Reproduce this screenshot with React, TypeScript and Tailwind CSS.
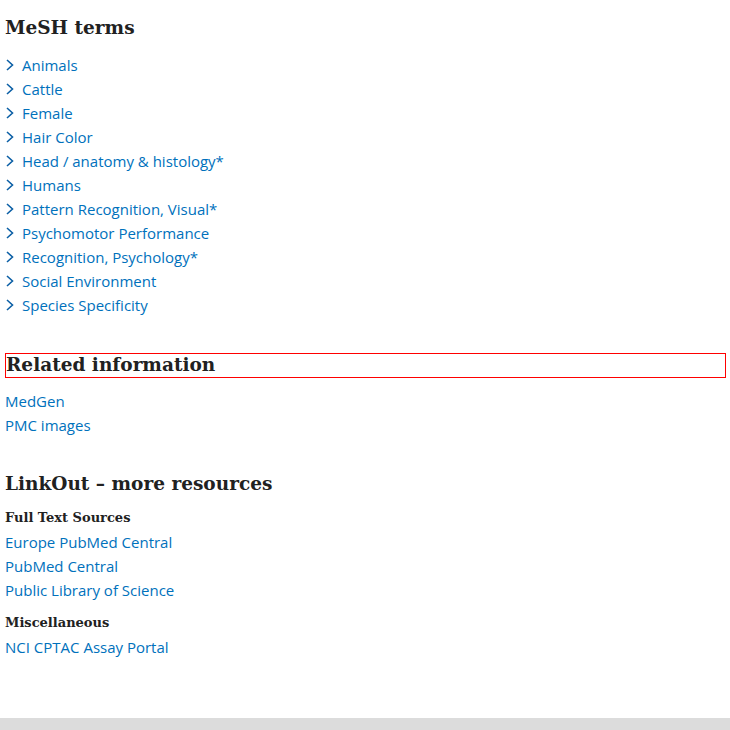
const MESH_TERMS = [
  'Animals',
  'Cattle',
  'Female',
  'Hair Color',
  'Head / anatomy & histology*',
  'Humans',
  'Pattern Recognition, Visual*',
  'Psychomotor Performance',
  'Recognition, Psychology*',
  'Social Environment',
  'Species Specificity',
]

const serif = "font-['DejaVu_Serif',serif]"

function Chevron() {
  return (
    <svg width="10" height="16" viewBox="0 0 10 16" className="shrink-0">
      <path d="M2 3 L7.5 8 L2 13" fill="none" stroke="#0b5fa5" strokeWidth="1.6" />
    </svg>
  )
}

export default function App() {
  return (
    <div className="w-[730px] h-[730px] bg-white flex flex-col font-['Open_Sans',sans-serif] overflow-hidden">
      <main className="flex-1 pl-[5px] pr-[4px]">
        <h2 className={`${serif} text-[18.5px] font-bold text-[#212121] mt-[15px] mb-[12px] leading-[26px]`}>MeSH terms</h2>
        <ul>
          {MESH_TERMS.map(term => (
            <li key={term} className="flex items-center gap-[7px] h-6 text-[15px] text-[#0071bc]">
              <Chevron />
              <span>{term}</span>
            </li>
          ))}
        </ul>

        <h2 className={`${serif} mt-[36px] border border-[#ff0000] text-[18.5px] font-bold text-[#212121] leading-[22px] h-[25px]`}>
          Related information
        </h2>
        <div className="mt-[11px] text-[15px] text-[#0071bc]">
          <div className="h-6 flex items-center">MedGen</div>
          <div className="h-6 flex items-center">PMC images</div>
        </div>

        <h2 className={`${serif} mt-[34px] text-[18.5px] font-bold text-[#212121] leading-[26px]`}>LinkOut – more resources</h2>
        <h3 className={`${serif} mt-[11px] mb-[2px] text-[13px] font-bold text-[#212121] leading-[20px]`}>Full Text Sources</h3>
        <div className="text-[15px] text-[#0071bc]">
          <div className="h-6 flex items-center">Europe PubMed Central</div>
          <div className="h-6 flex items-center">PubMed Central</div>
          <div className="h-6 flex items-center">Public Library of Science</div>
        </div>
        <h3 className={`${serif} mt-[11px] mb-[2px] text-[13px] font-bold text-[#212121] leading-[20px]`}>Miscellaneous</h3>
        <div className="text-[15px] text-[#0071bc]">
          <div className="h-6 flex items-center">NCI CPTAC Assay Portal</div>
        </div>
      </main>
      <div className="h-[12px] bg-[#dcdcdc]" />
    </div>
  )
}
